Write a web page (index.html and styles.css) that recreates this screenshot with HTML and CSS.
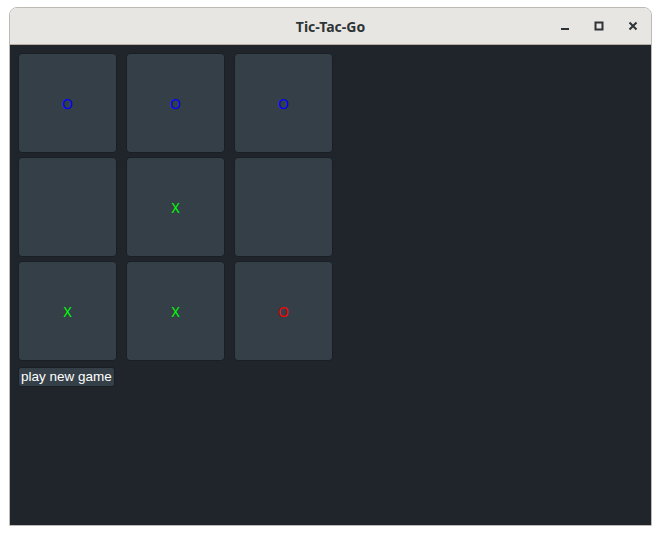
FILE: index.html
```html
<!DOCTYPE html>
<html>
<head>
<meta charset="utf-8">
<link rel="stylesheet" href="styles.css">
</head>
<body>
<div class="window">
  <div class="titlebar">
    <span class="title">Tic-Tac-Go</span>
    <div class="controls">
      <svg class="ctl" width="10" height="10" viewBox="0 0 10 10"><rect x="1" y="7" width="8" height="2" fill="#2e3436"/></svg>
      <svg class="ctl" width="10" height="10" viewBox="0 0 10 10"><rect x="1.5" y="1.5" width="7" height="7" fill="none" stroke="#2e3436" stroke-width="2"/></svg>
      <svg class="ctl" width="10" height="10" viewBox="0 0 10 10"><path d="M1.5 1.5 L8.5 8.5 M8.5 1.5 L1.5 8.5" stroke="#2e3436" stroke-width="2"/></svg>
    </div>
  </div>
  <div class="content">
    <div class="board">
      <div class="cell o-blue">O</div>
      <div class="cell o-blue">O</div>
      <div class="cell o-blue">O</div>
      <div class="cell"></div>
      <div class="cell x-green">X</div>
      <div class="cell"></div>
      <div class="cell x-green">X</div>
      <div class="cell x-green">X</div>
      <div class="cell o-red">O</div>
    </div>
    <button class="newgame">play new game</button>
  </div>
</div>
</body>
</html>
```

FILE: styles.css
```css
html, body {
  margin: 0;
  padding: 0;
  background: #ffffff;
}
.window {
  margin: 7px 0 0 9px;
  width: 641px;
  height: 517px;
  border: 1px solid #bdbab6;
  border-radius: 8px 8px 0 0;
  display: flex;
  flex-direction: column;
  overflow: hidden;
}
.titlebar {
  height: 36px;
  flex: none;
  background: #e8e6e3;
  border-bottom: 1px solid #b6ada3;
  position: relative;
  display: flex;
  align-items: center;
  justify-content: center;
}
.title {
  font-family: "Noto Sans", "DejaVu Sans", sans-serif;
  font-weight: 700;
  font-size: 14px;
  color: #2e3436;
}
.controls {
  position: absolute;
  right: 13px;
  top: 13px;
  display: flex;
  gap: 24px;
}
.ctl {
  display: block;
}
.content {
  flex: 1;
  background: #1f252b;
  padding: 8px 8px;
  display: flex;
  flex-direction: column;
  align-items: flex-start;
}
.board {
  display: grid;
  grid-template-columns: repeat(3, 99px);
  grid-auto-rows: 100px;
  column-gap: 9px;
  row-gap: 4px;
}
.cell {
  background: #343f48;
  border: 1px solid #1a1f24;
  border-radius: 4px;
  display: flex;
  align-items: center;
  justify-content: center;
  font-family: "Noto Sans", "DejaVu Sans", sans-serif;
  font-size: 14px;
}
.o-blue { color: #0000ff; }
.o-red { color: #ff0000; }
.x-green { color: #00ff00; }
.newgame {
  margin-top: 6px;
  height: 20px;
  padding: 0 2px;
  background: #343f48;
  border: 1px solid #1a1f24;
  border-radius: 3px;
  color: #ffffff;
  font-family: "Liberation Sans", Arial, sans-serif;
  font-size: 13.5px;
  line-height: 18px;
  cursor: pointer;
}
```
